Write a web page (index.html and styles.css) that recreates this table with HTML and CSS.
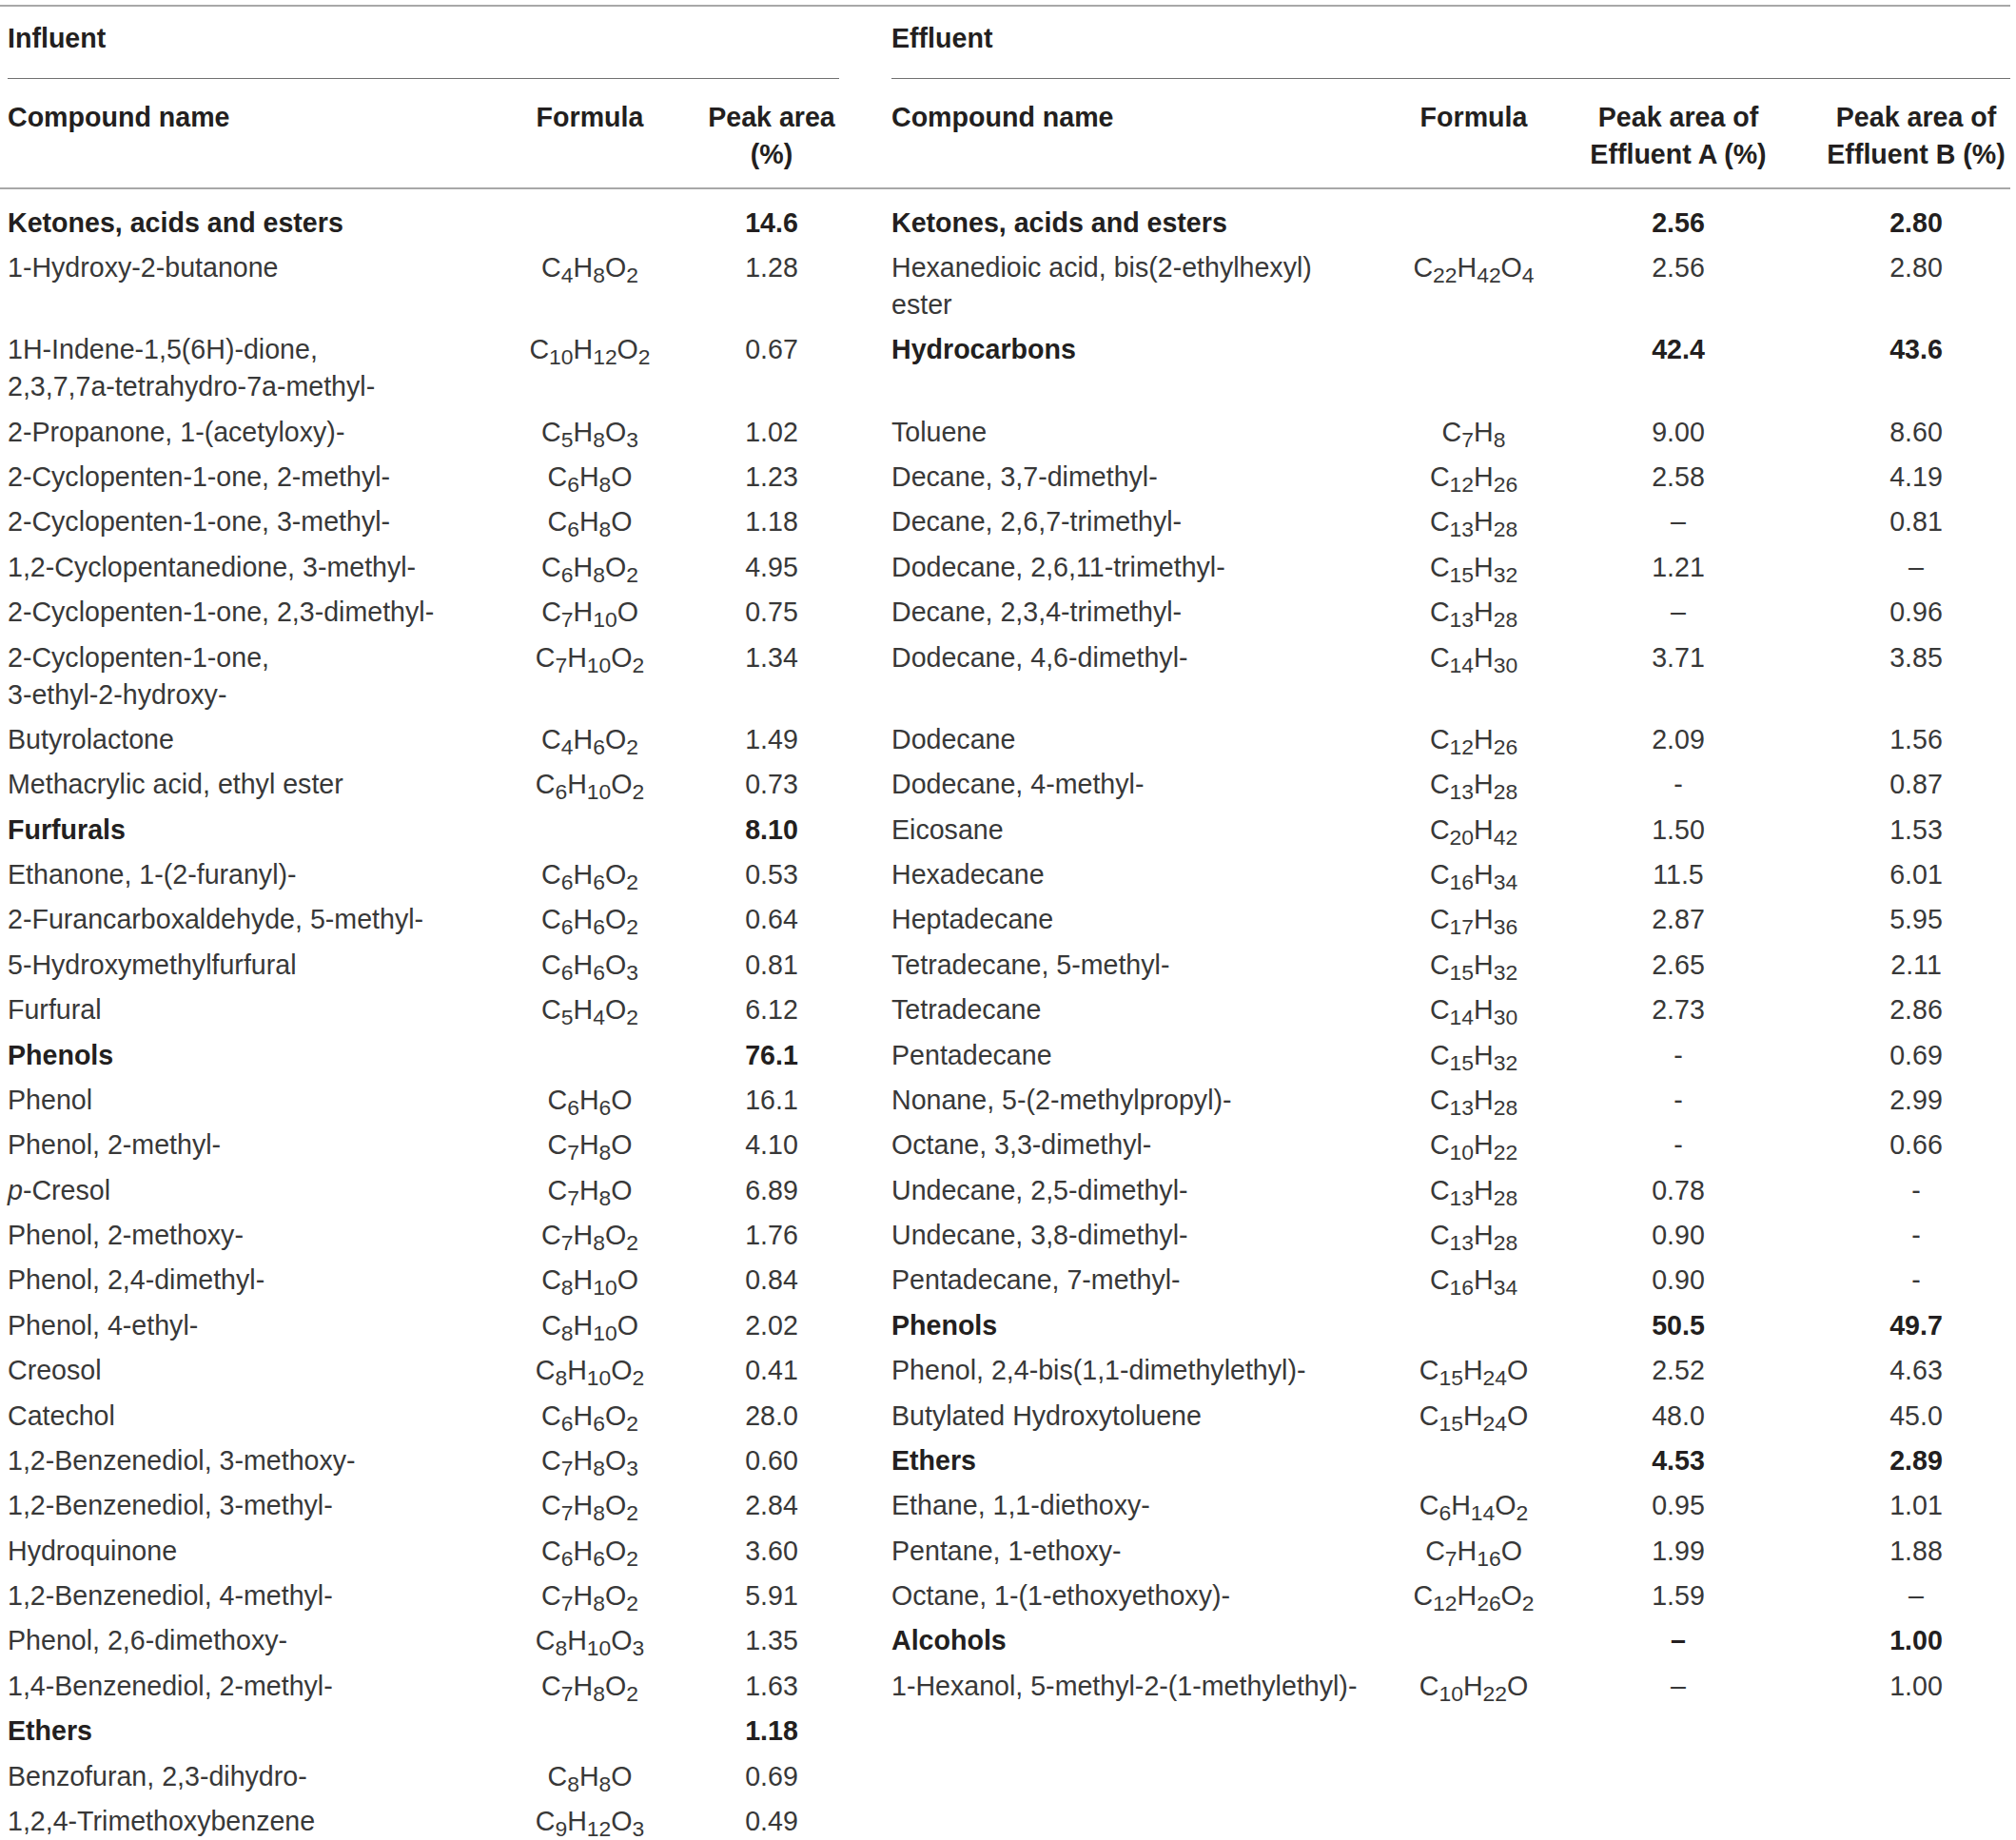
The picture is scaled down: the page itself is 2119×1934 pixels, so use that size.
FILE: index.html
```html
<!DOCTYPE html>
<html lang="en">
<head>
  <meta charset="UTF-8">
  <meta name="viewport" content="width=device-width, initial-scale=1.0">
  <title>Compounds in influent and effluent</title>
  <link rel="stylesheet" href="styles.css">
</head>
<body>

  <table class="compounds">
    <colgroup>
      <col class="col-name-l">
      <col class="col-formula-l">
      <col class="col-peak-l">
      <col class="col-gap">
      <col class="col-name-r">
      <col class="col-formula-r">
      <col class="col-peak-a">
      <col class="col-peak-b">
    </colgroup>
    <thead>
      <tr class="group-row">
        <th colspan="3" class="group"><div class="group-label">Influent</div></th>
        <th class="gap"></th>
        <th colspan="4" class="group"><div class="group-label">Effluent</div></th>
      </tr>
      <tr class="head-row">
        <th class="name">Compound name</th>
        <th class="formula">Formula</th>
        <th class="val">Peak area<br>(%)</th>
        <th class="gap"></th>
        <th class="name">Compound name</th>
        <th class="formula">Formula</th>
        <th class="val">Peak area of<br>Effluent A (%)</th>
        <th class="val">Peak area of<br>Effluent B (%)</th>
      </tr>
    </thead>
    <tbody>
      <tr>
        <td class="name cat">Ketones, acids and esters</td><td class="formula"></td><td class="val cat">14.6</td>
        <td class="gap"></td>
        <td class="name cat">Ketones, acids and esters</td><td class="formula"></td><td class="val cat">2.56</td><td class="val cat">2.80</td>
      </tr>
      <tr>
        <td class="name">1-Hydroxy-2-butanone</td><td class="formula">C<sub>4</sub>H<sub>8</sub>O<sub>2</sub></td><td class="val">1.28</td>
        <td class="gap"></td>
        <td class="name">Hexanedioic acid, bis(2-ethylhexyl)<br>ester</td><td class="formula">C<sub>22</sub>H<sub>42</sub>O<sub>4</sub></td><td class="val">2.56</td><td class="val">2.80</td>
      </tr>
      <tr>
        <td class="name">1H-Indene-1,5(6H)-dione,<br>2,3,7,7a-tetrahydro-7a-methyl-</td><td class="formula">C<sub>10</sub>H<sub>12</sub>O<sub>2</sub></td><td class="val">0.67</td>
        <td class="gap"></td>
        <td class="name cat">Hydrocarbons</td><td class="formula"></td><td class="val cat">42.4</td><td class="val cat">43.6</td>
      </tr>
      <tr>
        <td class="name">2-Propanone, 1-(acetyloxy)-</td><td class="formula">C<sub>5</sub>H<sub>8</sub>O<sub>3</sub></td><td class="val">1.02</td>
        <td class="gap"></td>
        <td class="name">Toluene</td><td class="formula">C<sub>7</sub>H<sub>8</sub></td><td class="val">9.00</td><td class="val">8.60</td>
      </tr>
      <tr>
        <td class="name">2-Cyclopenten-1-one, 2-methyl-</td><td class="formula">C<sub>6</sub>H<sub>8</sub>O</td><td class="val">1.23</td>
        <td class="gap"></td>
        <td class="name">Decane, 3,7-dimethyl-</td><td class="formula">C<sub>12</sub>H<sub>26</sub></td><td class="val">2.58</td><td class="val">4.19</td>
      </tr>
      <tr>
        <td class="name">2-Cyclopenten-1-one, 3-methyl-</td><td class="formula">C<sub>6</sub>H<sub>8</sub>O</td><td class="val">1.18</td>
        <td class="gap"></td>
        <td class="name">Decane, 2,6,7-trimethyl-</td><td class="formula">C<sub>13</sub>H<sub>28</sub></td><td class="val">–</td><td class="val">0.81</td>
      </tr>
      <tr>
        <td class="name">1,2-Cyclopentanedione, 3-methyl-</td><td class="formula">C<sub>6</sub>H<sub>8</sub>O<sub>2</sub></td><td class="val">4.95</td>
        <td class="gap"></td>
        <td class="name">Dodecane, 2,6,11-trimethyl-</td><td class="formula">C<sub>15</sub>H<sub>32</sub></td><td class="val">1.21</td><td class="val">–</td>
      </tr>
      <tr>
        <td class="name">2-Cyclopenten-1-one, 2,3-dimethyl-</td><td class="formula">C<sub>7</sub>H<sub>10</sub>O</td><td class="val">0.75</td>
        <td class="gap"></td>
        <td class="name">Decane, 2,3,4-trimethyl-</td><td class="formula">C<sub>13</sub>H<sub>28</sub></td><td class="val">–</td><td class="val">0.96</td>
      </tr>
      <tr>
        <td class="name">2-Cyclopenten-1-one,<br>3-ethyl-2-hydroxy-</td><td class="formula">C<sub>7</sub>H<sub>10</sub>O<sub>2</sub></td><td class="val">1.34</td>
        <td class="gap"></td>
        <td class="name">Dodecane, 4,6-dimethyl-</td><td class="formula">C<sub>14</sub>H<sub>30</sub></td><td class="val">3.71</td><td class="val">3.85</td>
      </tr>
      <tr>
        <td class="name">Butyrolactone</td><td class="formula">C<sub>4</sub>H<sub>6</sub>O<sub>2</sub></td><td class="val">1.49</td>
        <td class="gap"></td>
        <td class="name">Dodecane</td><td class="formula">C<sub>12</sub>H<sub>26</sub></td><td class="val">2.09</td><td class="val">1.56</td>
      </tr>
      <tr>
        <td class="name">Methacrylic acid, ethyl ester</td><td class="formula">C<sub>6</sub>H<sub>10</sub>O<sub>2</sub></td><td class="val">0.73</td>
        <td class="gap"></td>
        <td class="name">Dodecane, 4-methyl-</td><td class="formula">C<sub>13</sub>H<sub>28</sub></td><td class="val">-</td><td class="val">0.87</td>
      </tr>
      <tr>
        <td class="name cat">Furfurals</td><td class="formula"></td><td class="val cat">8.10</td>
        <td class="gap"></td>
        <td class="name">Eicosane</td><td class="formula">C<sub>20</sub>H<sub>42</sub></td><td class="val">1.50</td><td class="val">1.53</td>
      </tr>
      <tr>
        <td class="name">Ethanone, 1-(2-furanyl)-</td><td class="formula">C<sub>6</sub>H<sub>6</sub>O<sub>2</sub></td><td class="val">0.53</td>
        <td class="gap"></td>
        <td class="name">Hexadecane</td><td class="formula">C<sub>16</sub>H<sub>34</sub></td><td class="val">11.5</td><td class="val">6.01</td>
      </tr>
      <tr>
        <td class="name">2-Furancarboxaldehyde, 5-methyl-</td><td class="formula">C<sub>6</sub>H<sub>6</sub>O<sub>2</sub></td><td class="val">0.64</td>
        <td class="gap"></td>
        <td class="name">Heptadecane</td><td class="formula">C<sub>17</sub>H<sub>36</sub></td><td class="val">2.87</td><td class="val">5.95</td>
      </tr>
      <tr>
        <td class="name">5-Hydroxymethylfurfural</td><td class="formula">C<sub>6</sub>H<sub>6</sub>O<sub>3</sub></td><td class="val">0.81</td>
        <td class="gap"></td>
        <td class="name">Tetradecane, 5-methyl-</td><td class="formula">C<sub>15</sub>H<sub>32</sub></td><td class="val">2.65</td><td class="val">2.11</td>
      </tr>
      <tr>
        <td class="name">Furfural</td><td class="formula">C<sub>5</sub>H<sub>4</sub>O<sub>2</sub></td><td class="val">6.12</td>
        <td class="gap"></td>
        <td class="name">Tetradecane</td><td class="formula">C<sub>14</sub>H<sub>30</sub></td><td class="val">2.73</td><td class="val">2.86</td>
      </tr>
      <tr>
        <td class="name cat">Phenols</td><td class="formula"></td><td class="val cat">76.1</td>
        <td class="gap"></td>
        <td class="name">Pentadecane</td><td class="formula">C<sub>15</sub>H<sub>32</sub></td><td class="val">-</td><td class="val">0.69</td>
      </tr>
      <tr>
        <td class="name">Phenol</td><td class="formula">C<sub>6</sub>H<sub>6</sub>O</td><td class="val">16.1</td>
        <td class="gap"></td>
        <td class="name">Nonane, 5-(2-methylpropyl)-</td><td class="formula">C<sub>13</sub>H<sub>28</sub></td><td class="val">-</td><td class="val">2.99</td>
      </tr>
      <tr>
        <td class="name">Phenol, 2-methyl-</td><td class="formula">C<sub>7</sub>H<sub>8</sub>O</td><td class="val">4.10</td>
        <td class="gap"></td>
        <td class="name">Octane, 3,3-dimethyl-</td><td class="formula">C<sub>10</sub>H<sub>22</sub></td><td class="val">-</td><td class="val">0.66</td>
      </tr>
      <tr>
        <td class="name"><i>p</i>-Cresol</td><td class="formula">C<sub>7</sub>H<sub>8</sub>O</td><td class="val">6.89</td>
        <td class="gap"></td>
        <td class="name">Undecane, 2,5-dimethyl-</td><td class="formula">C<sub>13</sub>H<sub>28</sub></td><td class="val">0.78</td><td class="val">-</td>
      </tr>
      <tr>
        <td class="name">Phenol, 2-methoxy-</td><td class="formula">C<sub>7</sub>H<sub>8</sub>O<sub>2</sub></td><td class="val">1.76</td>
        <td class="gap"></td>
        <td class="name">Undecane, 3,8-dimethyl-</td><td class="formula">C<sub>13</sub>H<sub>28</sub></td><td class="val">0.90</td><td class="val">-</td>
      </tr>
      <tr>
        <td class="name">Phenol, 2,4-dimethyl-</td><td class="formula">C<sub>8</sub>H<sub>10</sub>O</td><td class="val">0.84</td>
        <td class="gap"></td>
        <td class="name">Pentadecane, 7-methyl-</td><td class="formula">C<sub>16</sub>H<sub>34</sub></td><td class="val">0.90</td><td class="val">-</td>
      </tr>
      <tr>
        <td class="name">Phenol, 4-ethyl-</td><td class="formula">C<sub>8</sub>H<sub>10</sub>O</td><td class="val">2.02</td>
        <td class="gap"></td>
        <td class="name cat">Phenols</td><td class="formula"></td><td class="val cat">50.5</td><td class="val cat">49.7</td>
      </tr>
      <tr>
        <td class="name">Creosol</td><td class="formula">C<sub>8</sub>H<sub>10</sub>O<sub>2</sub></td><td class="val">0.41</td>
        <td class="gap"></td>
        <td class="name">Phenol, 2,4-bis(1,1-dimethylethyl)-</td><td class="formula">C<sub>15</sub>H<sub>24</sub>O</td><td class="val">2.52</td><td class="val">4.63</td>
      </tr>
      <tr>
        <td class="name">Catechol</td><td class="formula">C<sub>6</sub>H<sub>6</sub>O<sub>2</sub></td><td class="val">28.0</td>
        <td class="gap"></td>
        <td class="name">Butylated Hydroxytoluene</td><td class="formula">C<sub>15</sub>H<sub>24</sub>O</td><td class="val">48.0</td><td class="val">45.0</td>
      </tr>
      <tr>
        <td class="name">1,2-Benzenediol, 3-methoxy-</td><td class="formula">C<sub>7</sub>H<sub>8</sub>O<sub>3</sub></td><td class="val">0.60</td>
        <td class="gap"></td>
        <td class="name cat">Ethers</td><td class="formula"></td><td class="val cat">4.53</td><td class="val cat">2.89</td>
      </tr>
      <tr>
        <td class="name">1,2-Benzenediol, 3-methyl-</td><td class="formula">C<sub>7</sub>H<sub>8</sub>O<sub>2</sub></td><td class="val">2.84</td>
        <td class="gap"></td>
        <td class="name">Ethane, 1,1-diethoxy-</td><td class="formula">C<sub>6</sub>H<sub>14</sub>O<sub>2</sub></td><td class="val">0.95</td><td class="val">1.01</td>
      </tr>
      <tr>
        <td class="name">Hydroquinone</td><td class="formula">C<sub>6</sub>H<sub>6</sub>O<sub>2</sub></td><td class="val">3.60</td>
        <td class="gap"></td>
        <td class="name">Pentane, 1-ethoxy-</td><td class="formula">C<sub>7</sub>H<sub>16</sub>O</td><td class="val">1.99</td><td class="val">1.88</td>
      </tr>
      <tr>
        <td class="name">1,2-Benzenediol, 4-methyl-</td><td class="formula">C<sub>7</sub>H<sub>8</sub>O<sub>2</sub></td><td class="val">5.91</td>
        <td class="gap"></td>
        <td class="name">Octane, 1-(1-ethoxyethoxy)-</td><td class="formula">C<sub>12</sub>H<sub>26</sub>O<sub>2</sub></td><td class="val">1.59</td><td class="val">–</td>
      </tr>
      <tr>
        <td class="name">Phenol, 2,6-dimethoxy-</td><td class="formula">C<sub>8</sub>H<sub>10</sub>O<sub>3</sub></td><td class="val">1.35</td>
        <td class="gap"></td>
        <td class="name cat">Alcohols</td><td class="formula"></td><td class="val cat">–</td><td class="val cat">1.00</td>
      </tr>
      <tr>
        <td class="name">1,4-Benzenediol, 2-methyl-</td><td class="formula">C<sub>7</sub>H<sub>8</sub>O<sub>2</sub></td><td class="val">1.63</td>
        <td class="gap"></td>
        <td class="name">1-Hexanol, 5-methyl-2-(1-methylethyl)-</td><td class="formula">C<sub>10</sub>H<sub>22</sub>O</td><td class="val">–</td><td class="val">1.00</td>
      </tr>
      <tr>
        <td class="name cat">Ethers</td><td class="formula"></td><td class="val cat">1.18</td>
        <td class="gap"></td>
        <td class="name"></td><td class="formula"></td><td class="val"></td><td class="val"></td>
      </tr>
      <tr>
        <td class="name">Benzofuran, 2,3-dihydro-</td><td class="formula">C<sub>8</sub>H<sub>8</sub>O</td><td class="val">0.69</td>
        <td class="gap"></td>
        <td class="name"></td><td class="formula"></td><td class="val"></td><td class="val"></td>
      </tr>
      <tr>
        <td class="name">1,2,4-Trimethoxybenzene</td><td class="formula">C<sub>9</sub>H<sub>12</sub>O<sub>3</sub></td><td class="val">0.49</td>
        <td class="gap"></td>
        <td class="name"></td><td class="formula"></td><td class="val"></td><td class="val"></td>
      </tr>
    </tbody>
  </table>

</body>
</html>
```

FILE: styles.css
```css
body {
  font-family: 'Liberation Sans', Arial, sans-serif;
  font-size: 28.6px;
  color: #383838;
  background-color: #fff;
  margin: 0;
  padding: 5px 0 0 0;
}

.compounds {
  width: 2113px;
  table-layout: fixed;
  border-collapse: collapse;
  border-top: 2px solid #a8a8a8;
}

.col-name-l { width: 500px; }
.col-formula-l { width: 240px; }
.col-peak-l { width: 142px; }
.col-gap { width: 47px; }
.col-name-r { width: 556px; }
.col-formula-r { width: 128px; }
.col-peak-a { width: 302px; }
.col-peak-b { width: 198px; }

th, td {
  padding: 4.2px 0;
  line-height: 39px;
  vertical-align: top;
  font-weight: normal;
}

th {
  font-weight: bold;
  color: #231f20;
}

.name {
  padding-left: 8px;
  text-align: left;
  white-space: nowrap;
}

.formula, .val {
  text-align: center;
  white-space: nowrap;
}

.cat {
  font-weight: bold;
  color: #231f20;
}

sub {
  font-size: 0.8em;
  line-height: 0;
  vertical-align: -0.25em;
}

/* Influent / Effluent labels */
.group {
  padding: 0 0 0 8px;
  text-align: left;
}

.group-label {
  padding: 14px 0 22px;
  border-bottom: 1px solid #707070;
}

.head-row th {
  padding: 20.5px 0 15.5px;
  border-bottom: 2px solid #a8a8a8;
}

.head-row th.name {
  padding-left: 8px;
}

tbody tr:first-child td {
  padding-top: 15.5px;
}
```
